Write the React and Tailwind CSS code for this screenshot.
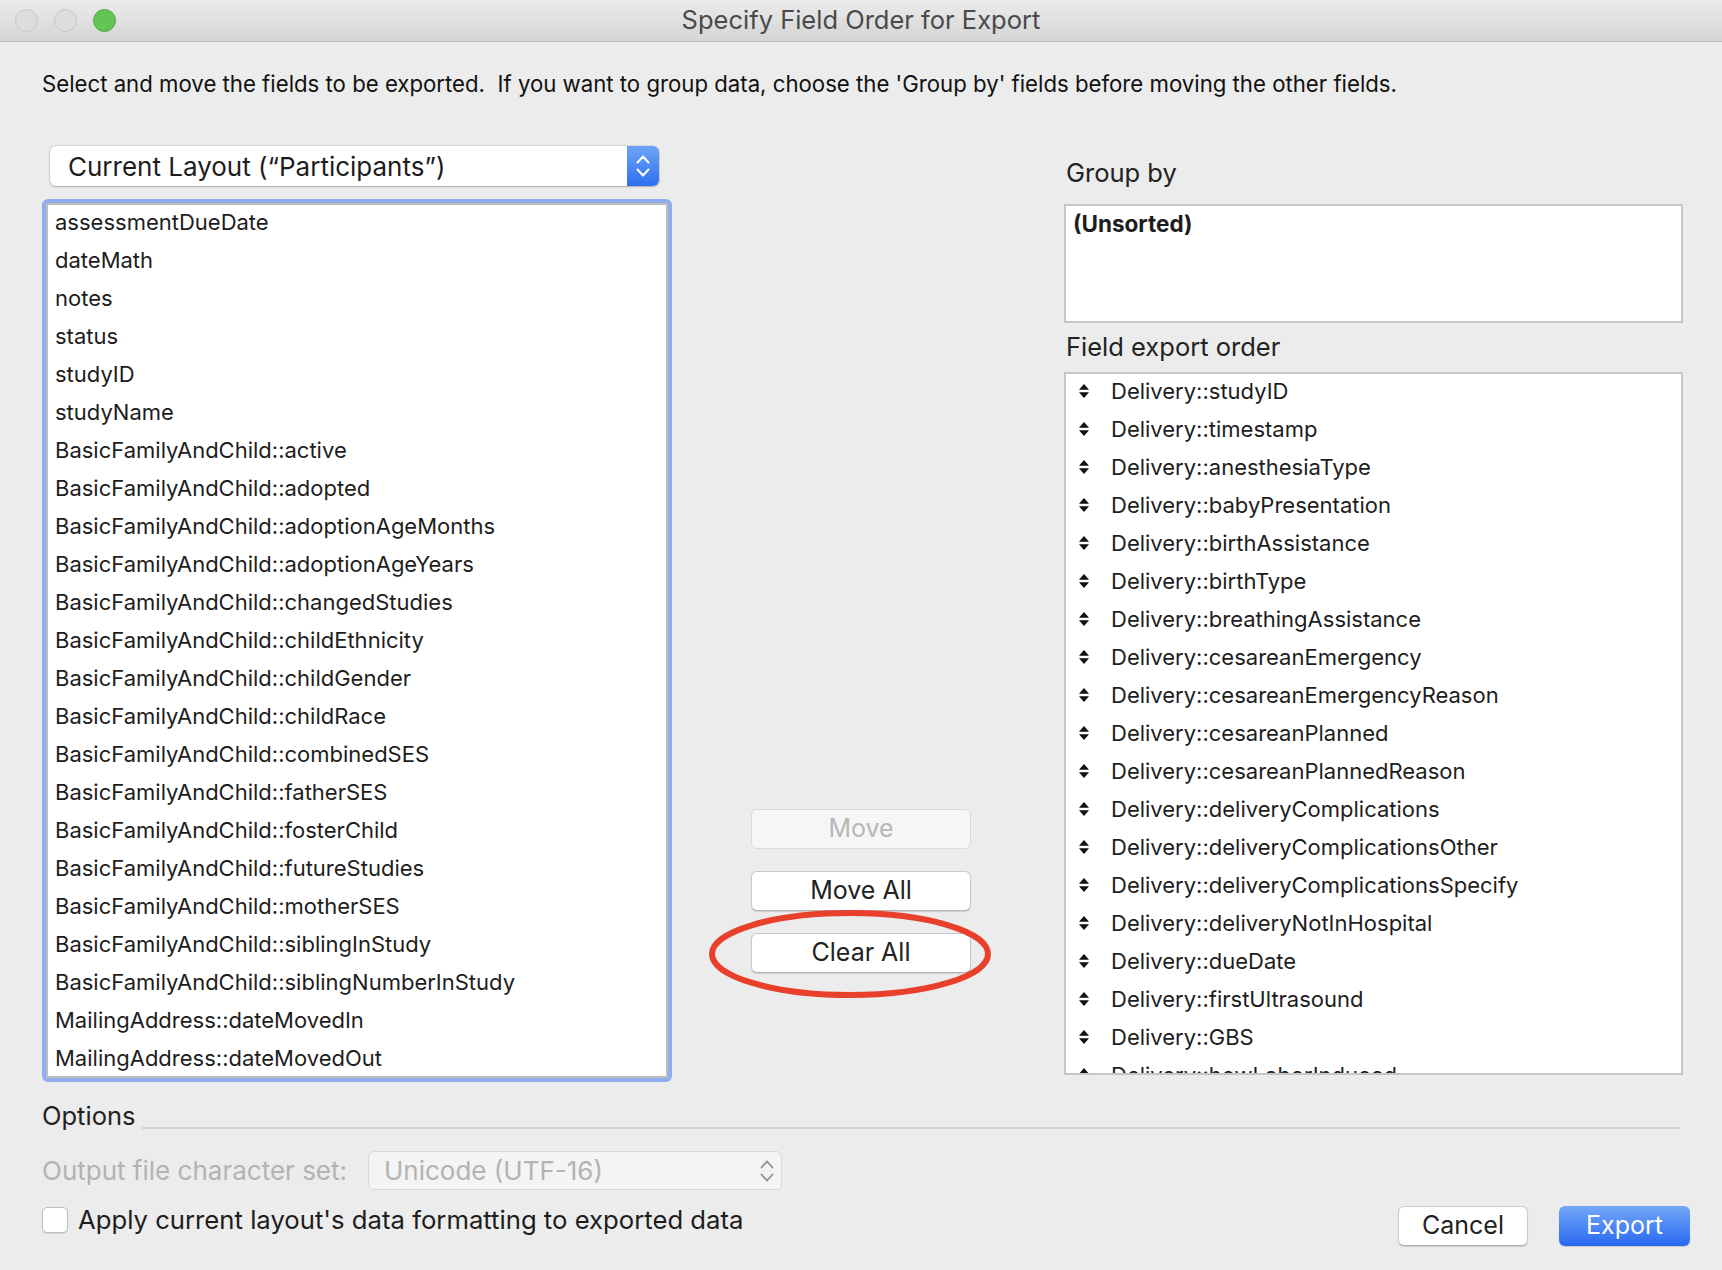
import React from 'react';

const leftFields = [
  'assessmentDueDate',
  'dateMath',
  'notes',
  'status',
  'studyID',
  'studyName',
  'BasicFamilyAndChild::active',
  'BasicFamilyAndChild::adopted',
  'BasicFamilyAndChild::adoptionAgeMonths',
  'BasicFamilyAndChild::adoptionAgeYears',
  'BasicFamilyAndChild::changedStudies',
  'BasicFamilyAndChild::childEthnicity',
  'BasicFamilyAndChild::childGender',
  'BasicFamilyAndChild::childRace',
  'BasicFamilyAndChild::combinedSES',
  'BasicFamilyAndChild::fatherSES',
  'BasicFamilyAndChild::fosterChild',
  'BasicFamilyAndChild::futureStudies',
  'BasicFamilyAndChild::motherSES',
  'BasicFamilyAndChild::siblingInStudy',
  'BasicFamilyAndChild::siblingNumberInStudy',
  'MailingAddress::dateMovedIn',
  'MailingAddress::dateMovedOut',
];

const exportFields = [
  'studyID',
  'timestamp',
  'anesthesiaType',
  'babyPresentation',
  'birthAssistance',
  'birthType',
  'breathingAssistance',
  'cesareanEmergency',
  'cesareanEmergencyReason',
  'cesareanPlanned',
  'cesareanPlannedReason',
  'deliveryComplications',
  'deliveryComplicationsOther',
  'deliveryComplicationsSpecify',
  'deliveryNotInHospital',
  'dueDate',
  'firstUltrasound',
  'GBS',
  'howLaborInduced',
];

const UpDown = ({ stroke = 'white', width = 2 }) => (
  <svg width="14" height="24" viewBox="0 0 14 24">
    <path d="M1.5 8.5 L7 2.5 L12.5 8.5" fill="none" stroke={stroke} strokeWidth={width} strokeLinecap="round" strokeLinejoin="round" />
    <path d="M1.5 15.5 L7 21.5 L12.5 15.5" fill="none" stroke={stroke} strokeWidth={width} strokeLinecap="round" strokeLinejoin="round" />
  </svg>
);

const DragHandle = () => (
  <svg width="10" height="14" viewBox="0 0 10 14">
    <path d="M5 0 L10 5.8 L0 5.8 Z" fill="#111" />
    <path d="M5 14 L10 8.2 L0 8.2 Z" fill="#111" />
  </svg>
);

const MacButton = ({ children, disabled }) => (
  <div
    className={`w-[220px] h-[40px] rounded-[6px] flex items-center justify-center text-[25px] ${
      disabled
        ? 'bg-[#f6f6f6] border border-[#dadada] text-[#b7b7b7]'
        : 'bg-white border border-[#c9c9c9] border-b-[#b3b3b3] text-[#222] shadow-[0_1px_1px_rgba(0,0,0,0.12)]'
    }`}
  >
    {children}
  </div>
);

export default function App() {
  return (
    <div className="w-[1722px] h-[1270px] bg-[#ececec] font-[Inter,sans-serif] text-[#222] overflow-hidden flex flex-col">
      {/* Title bar */}
      <div className="h-[42px] relative flex items-center justify-center bg-gradient-to-b from-[#ebebeb] to-[#d5d5d5] border-b border-[#b6b6b6]">
        <div className="absolute left-[15px] top-[9px] flex gap-[16px]">
          <div className="w-[23px] h-[23px] rounded-full bg-[#dddddd] border border-[#c7c7c7]" />
          <div className="w-[23px] h-[23px] rounded-full bg-[#dddddd] border border-[#c7c7c7]" />
          <div className="w-[23px] h-[23px] rounded-full bg-[#62c554] border border-[#50a842]" />
        </div>
        <div className="text-[25.5px] text-[#4a4a4a]">Specify Field Order for Export</div>
      </div>

      <div className="flex-1 flex flex-col px-[42px]">
        <div className="pt-[28px] h-[104px] text-[22.2px] leading-[28px] text-[#111] whitespace-pre">
          {"Select and move the fields to be exported.  If you want to group data, choose the 'Group by' fields before moving the other fields."}
        </div>

        {/* Main area */}
        <div className="flex">
          {/* Left column */}
          <div className="w-[630px] flex flex-col">
            <div className="ml-[8px] w-[609px] h-[40px] flex rounded-[6px] bg-white shadow-[0_0_0_1px_rgba(0,0,0,0.08),0_1px_2px_rgba(0,0,0,0.2)] overflow-hidden">
              <div className="flex-1 flex items-center pl-[18px] text-[26px] text-[#1d1d1d]">
                Current Layout (“Participants”)
              </div>
              <div className="w-[32px] flex items-center justify-center bg-gradient-to-b from-[#6ea4f8] to-[#2c6ff0]">
                <UpDown />
              </div>
            </div>
            <div className="mt-[13px] h-[883px] rounded-[6px] bg-[#8eaef0] p-[4px]">
              <div className="h-full bg-white border-2 border-[#bdbdbd] pl-[7px] overflow-hidden">
                {leftFields.map((f) => (
                  <div key={f} className="h-[38px] pb-[4px] flex items-center text-[22px] text-[#1d1d1d] whitespace-nowrap">
                    {f}
                  </div>
                ))}
              </div>
            </div>
          </div>

          {/* Middle column */}
          <div className="flex-1 flex flex-col items-center justify-end pr-[14px] pb-[109px]">
            <MacButton disabled>Move</MacButton>
            <div className="mt-[22px]">
              <MacButton>Move All</MacButton>
            </div>
            <div className="mt-[22px] relative">
              <MacButton>Clear All</MacButton>
              <svg
                width="290"
                height="92"
                viewBox="0 0 290 92"
                className="absolute left-[-44px] top-[-25px] pointer-events-none"
              >
                <ellipse cx="143" cy="46" rx="138" ry="41" fill="none" stroke="#e8402b" strokeWidth="6" />
              </svg>
            </div>
          </div>

          {/* Right column */}
          <div className="w-[619px] mr-[-3px] flex flex-col">
            <div className="h-[58px] pt-[13px] text-[25.5px] leading-[28px] pl-[2px]">Group by</div>
            <div className="h-[119px] bg-white border-2 border-[#c6c6c6] px-[7px] pt-[4px]">
              <div className="text-[22.5px] font-bold text-[#1d1d1d] leading-[28px]">(Unsorted)</div>
            </div>
            <div className="h-[49px] flex items-center text-[25.5px] pl-[2px]">Field export order</div>
            <div className="h-[703px] bg-white border-2 border-[#c6c6c6] overflow-hidden">
              {exportFields.map((f) => (
                <div key={f} className="h-[38px] pb-[4px] flex items-center text-[22px] text-[#1d1d1d] whitespace-nowrap">
                  <div className="w-[36px] flex justify-center">
                    <DragHandle />
                  </div>
                  <span className="ml-[9px]">Delivery::{f}</span>
                </div>
              ))}
            </div>
          </div>
        </div>

        {/* Options */}
        <div className="mt-[20px] flex items-center">
          <div className="text-[25.5px] leading-[28px]">Options</div>
          <div className="flex-1 h-[2px] bg-[#d2d2d2] mt-[24px] ml-[7px] mr-[1px]" />
        </div>

        <div className="flex justify-between items-start">
          <div className="flex flex-col">
            <div className="mt-[21px] flex items-center">
              <div className="text-[26px] text-[#b3b3b3] w-[326px]">Output file character set:</div>
              <div className="w-[414px] h-[39px] rounded-[6px] bg-[#f4f4f4] border border-[#d8d8d8] flex items-center justify-between pl-[15px] pr-[7px]">
                <span className="text-[26px] text-[#b3b3b3]">Unicode (UTF-16)</span>
                <UpDown stroke="#8e8e8e" width={1.8} />
              </div>
            </div>
            <div className="mt-[11px] flex items-center">
              <div className="w-[26px] h-[26px] rounded-[5px] bg-white border border-[#bdbdbd] shadow-[0_1px_1px_rgba(0,0,0,0.1)]" />
              <div className="ml-[10px] text-[25.7px] text-[#1d1d1d]">Apply current layout's data formatting to exported data</div>
            </div>
          </div>
          <div className="flex gap-[31px] mt-[76px] mr-[-10px]">
            <div className="w-[130px] h-[40px] rounded-[6px] bg-white border border-[#c9c9c9] border-b-[#b0b0b0] shadow-[0_1px_1px_rgba(0,0,0,0.12)] flex items-center justify-center text-[25px] text-[#222]">
              Cancel
            </div>
            <div className="w-[131px] h-[40px] rounded-[6px] bg-gradient-to-b from-[#75a6f8] to-[#2767f1] shadow-[0_1px_1px_rgba(0,0,0,0.15)] flex items-center justify-center text-[25px] text-white">
              Export
            </div>
          </div>
        </div>
      </div>
    </div>
  );
}
